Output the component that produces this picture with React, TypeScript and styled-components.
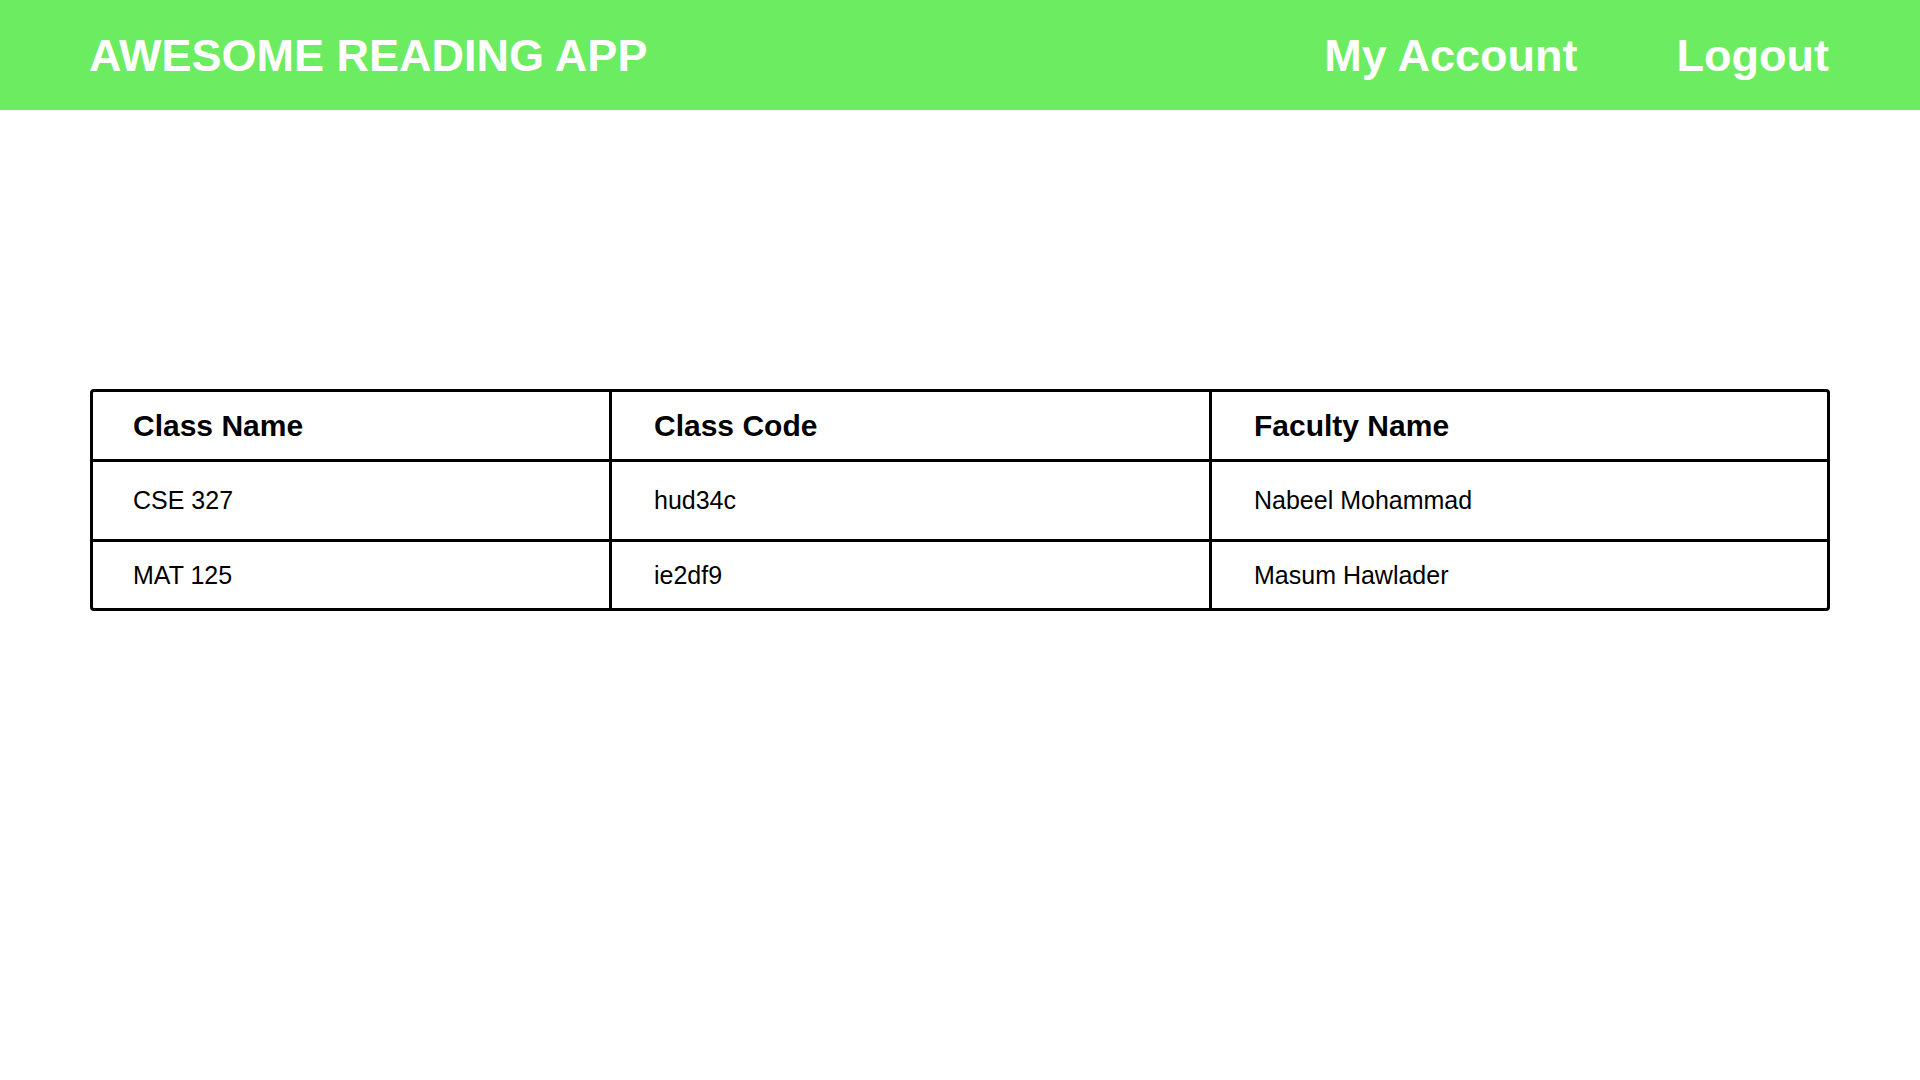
import React from "react";
import styled, { createGlobalStyle } from "styled-components";

const GlobalStyle = createGlobalStyle`
  * { box-sizing: border-box; }
  html, body { margin: 0; padding: 0; background: #ffffff; }
  body { font-family: "Liberation Sans", Arial, sans-serif; color: #000; }
`;

const Page = styled.div`
  width: 1920px;
  min-height: 1080px;
  display: flex;
  flex-direction: column;
`;

const TopBar = styled.header`
  height: 110px;
  background: #6cec60;
  display: flex;
  align-items: center;
  justify-content: space-between;
  padding: 2px 91px 0 89px;
`;

const Brand = styled.div`
  font-size: 45px;
  font-weight: 700;
  color: #ffffff;
  white-space: nowrap;
`;

const Nav = styled.nav`
  display: flex;
  align-items: center;
  gap: 99px;
`;

const NavLink = styled.a`
  font-size: 45px;
  font-weight: 700;
  color: #ffffff;
  text-decoration: none;
  white-space: nowrap;
  cursor: pointer;
`;

const Content = styled.main`
  padding: 279px 90px 0 90px;
`;

const TableFrame = styled.div`
  width: 1740px;
  border: 3px solid #000;
  border-radius: 4px;
  display: grid;
  grid-template-columns: 519px 600px 615px;
`;

const Cell = styled.div<{ $h: number; $col: number; $last?: boolean; $lastRow?: boolean; $head?: boolean }>`
  height: ${(p) => p.$h}px;
  display: flex;
  align-items: center;
  padding-left: ${(p) => (p.$col === 0 ? "40px" : "42px")};
  border-right: ${(p) => (p.$last ? "none" : "3px solid #000")};
  border-bottom: ${(p) => (p.$lastRow ? "none" : "3px solid #000")};
  font-size: ${(p) => (p.$head ? "30px" : "25px")};
  font-weight: ${(p) => (p.$head ? 700 : 400)};
  color: #000;
  white-space: nowrap;
`;

const headers = ["Class Name", "Class Code", "Faculty Name"];
const rows = [
  ["CSE 327", "hud34c", "Nabeel Mohammad"],
  ["MAT 125", "ie2df9", "Masum Hawlader"],
];
const rowHeights = [80, 66];

export default function App() {
  return (
    <>
      <GlobalStyle />
      <Page>
        <TopBar>
          <Brand>AWESOME READING APP</Brand>
          <Nav>
            <NavLink>My Account</NavLink>
            <NavLink>Logout</NavLink>
          </Nav>
        </TopBar>
        <Content>
          <TableFrame>
            {headers.map((h, i) => (
              <Cell key={h} $h={70} $col={i} $head $last={i === 2}>
                {h}
              </Cell>
            ))}
            {rows.map((r, ri) =>
              r.map((c, ci) => (
                <Cell
                  key={`${ri}-${ci}`}
                  $h={rowHeights[ri]}
                  $col={ci}
                  $last={ci === 2}
                  $lastRow={ri === rows.length - 1}
                >
                  {c}
                </Cell>
              ))
            )}
          </TableFrame>
        </Content>
      </Page>
    </>
  );
}
